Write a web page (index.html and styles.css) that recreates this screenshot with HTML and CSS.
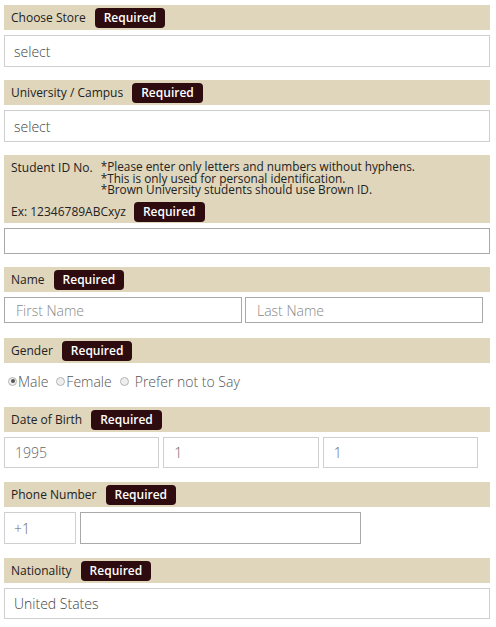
FILE: index.html
```html
<!DOCTYPE html>
<html lang="en">
<head>
<meta charset="utf-8">
<title>Form</title>
<link rel="stylesheet" href="styles.css">
</head>
<body>
<form class="form">
  <section class="field">
    <div class="bar"><span class="label">Choose Store</span><span class="req">Required</span></div>
    <div class="control select">select</div>
  </section>

  <section class="field">
    <div class="bar"><span class="label">University / Campus</span><span class="req">Required</span></div>
    <div class="control select">select</div>
  </section>

  <section class="field">
    <div class="bar tall">
      <div class="top">
        <span class="label">Student ID No.</span>
        <div class="notes">
          <div>*Please enter only letters and numbers without hyphens.</div>
          <div>*This is only used for personal identification.</div>
          <div>*Brown University students should use Brown ID.</div>
        </div>
      </div>
      <div class="bottom"><span class="label">Ex: 12346789ABCxyz</span><span class="req">Required</span></div>
    </div>
    <div class="control text dark"></div>
  </section>

  <section class="field f-name">
    <div class="bar"><span class="label">Name</span><span class="req">Required</span></div>
    <div class="row two">
      <div class="control text dark ph">First Name</div>
      <div class="control text dark ph">Last Name</div>
    </div>
  </section>

  <section class="field">
    <div class="bar"><span class="label">Gender</span><span class="req">Required</span></div>
    <div class="radios">
      <span class="radio on"></span><span class="rtext">Male</span>
      <span class="radio"></span><span class="rtext">Female</span>
      <span class="radio gap"></span><span class="rtext">Prefer not to Say</span>
    </div>
  </section>

  <section class="field f-wide">
    <div class="bar"><span class="label">Date of Birth</span><span class="req">Required</span></div>
    <div class="row three">
      <div class="control select">1995</div>
      <div class="control select">1</div>
      <div class="control select">1</div>
    </div>
  </section>

  <section class="field f-wide">
    <div class="bar"><span class="label">Phone Number</span><span class="req">Required</span></div>
    <div class="row phone">
      <div class="control select">+1</div>
      <div class="control select dark"></div>
    </div>
  </section>

  <section class="field">
    <div class="bar"><span class="label">Nationality</span><span class="req">Required</span></div>
    <div class="control select nat">United States</div>
  </section>
</form>
</body>
</html>
```

FILE: styles.css
```css
* { box-sizing: border-box; }
html, body { margin: 0; padding: 0; background: #fff; }
body { font-family: "Open Sans", "DejaVu Sans", sans-serif; }

.form {
  width: 486px;
  margin: 5px 0 0 4px;
}

.field { margin-bottom: 13px; }
.field.f-name { margin-bottom: 15px; }
.field.f-wide { margin-bottom: 14px; }

.bar {
  background: #dfd6bc;
  height: 25px;
  display: flex;
  align-items: center;
  padding: 0 7px;
  margin-bottom: 5px;
}
.label {
  font-size: 12px;
  color: #222;
  margin-right: 9px;
  white-space: nowrap;
}
.req {
  display: inline-block;
  background: #2e0b0e;
  color: #fff;
  font-size: 12px;
  font-weight: 600;
  height: 20px;
  line-height: 20px;
  padding: 0 9px;
  border-radius: 4px;
}

.bar.tall {
  height: 68px;
  display: block;
  padding: 6px 7px 0;
}
.top { display: flex; align-items: flex-start; }
.top .label { margin-right: 8px; line-height: 13px; }
.notes {
  font-size: 11.8px;
  color: #222;
  line-height: 11.5px;
}
.bottom {
  display: flex;
  align-items: center;
  margin-top: 6px;
}
.bottom .label { margin-right: 8px; }

.control {
  border: 1px solid #cfcfcf;
  background: #fff;
  height: 32px;
  font-size: 14px;
  font-weight: 300;
  color: #444;
  padding: 0 9px;
  display: flex;
  align-items: center;
}
.control.text { height: 26px; }
.control.dark { border-color: #a9a9a9; }
.control.ph { color: #888; padding-left: 11px; }
.control.nat { height: 31px; }

.row { display: flex; }
.row.two { gap: 3px; width: 479px; }
.row.two .control { flex: 1; }
.row.three { gap: 4px; width: 474px; }
.row.three .control { flex: 1; height: 31px; padding-left: 10px; color: #666; }
.row.phone { gap: 4px; }
.row.phone .control:first-child { width: 72px; color: #666; }
.row.phone .control:last-child { width: 281px; height: 32px; }

.radios {
  display: flex;
  align-items: center;
  height: 26px;
  margin-bottom: 13px;
  padding-left: 4px;
  font-size: 14px;
  font-weight: 300;
  color: #555;
}
.radio {
  width: 9px;
  height: 9px;
  border-radius: 50%;
  border: 1px solid #b5b5b5;
  background: #eee;
  margin-right: 1px;
  position: relative;
}
.radio.on::after {
  content: "";
  position: absolute;
  left: 1.5px; top: 1.5px;
  width: 4px; height: 4px;
  border-radius: 50%;
  background: #555;
}
.radio.gap { margin-right: 6px; }
.rtext { margin-right: 8px; }
```
